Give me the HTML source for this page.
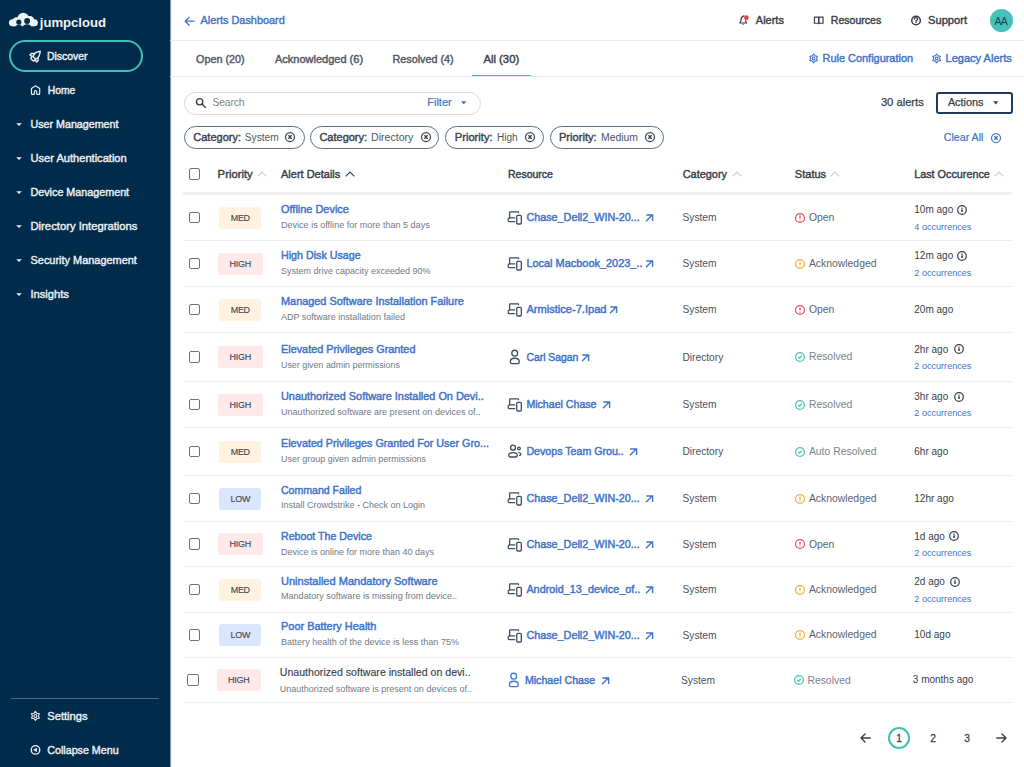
<!DOCTYPE html>
<html><head><meta charset="utf-8"><title>Alerts</title>
<style>
html,body{margin:0;padding:0;width:1024px;height:767px;overflow:hidden;background:#fff;}
body{position:relative;font-family:"Liberation Sans",sans-serif;}
.t{position:absolute;white-space:nowrap;}
svg{overflow:visible}
</style></head><body>
<div style="position:absolute;left:0px;top:0px;width:170px;height:767px;background:#002b4b"></div>
<div style="position:absolute;left:170px;top:0px;width:1px;height:767px;background:#8797a8"></div>
<div style="position:absolute;left:171px;top:0px;width:1px;height:767px;background:#eef0f3"></div>
<svg style="position:absolute;left:6px;top:8px;" width="36" height="24" viewBox="0 0 1024 683"><g fill="#f2f3f6">
<circle cx="185" cy="420" r="102"/><circle cx="490" cy="300" r="165"/><circle cx="805" cy="420" r="102"/>
<circle cx="300" cy="370" r="110"/><circle cx="680" cy="350" r="120"/>
<rect x="185" y="330" width="620" height="192"/></g>
<g fill="#002b4b"><circle cx="365" cy="400" r="74"/><ellipse cx="365" cy="615" rx="118" ry="145"/>
<circle cx="600" cy="372" r="84"/><ellipse cx="600" cy="605" rx="145" ry="145"/>
</g></svg>
<div class="t" style="left:39.80px;top:16px;font-size:13.1px;line-height:13.1px;font-weight:700;color:#f2f3f6;">jumpcloud</div>
<div style="position:absolute;left:9px;top:40px;width:134px;height:32px;box-sizing:border-box;border:2px solid #40bfb5;border-radius:16px"></div>
<svg style="position:absolute;left:26px;top:46px;" width="20" height="20" viewBox="0 0 767 767"><g fill="none" stroke="#eceef2" stroke-width="55" stroke-linejoin="round" stroke-linecap="round">
<path d="M545 200 C420 215 300 290 268 400 L372 500 C485 462 535 340 545 200 Z"/>
<path d="M300 290 L205 290 L150 345 L232 395"/>
<path d="M465 468 L462 560 L405 612 L352 530"/>
<path d="M232 400 L185 455 L200 500 L265 560 L300 575 L350 528"/></g></svg>
<div class="t" style="left:46.90px;top:52px;font-size:10.45px;line-height:10.45px;font-weight:400;color:#eceef2;-webkit-text-stroke:0.42px #eceef2;">Discover</div>
<svg style="position:absolute;left:26px;top:80px;" width="20" height="20" viewBox="0 0 767 767"><path d="M300 555 H245 Q210 555 210 520 V330 L365 225 L525 330 V520 Q525 555 490 555 H445 Q410 555 410 520 V450 Q410 405 365 405 Q320 405 320 450 V520 Q320 555 300 555 Z" fill="none" stroke="#eceef2" stroke-width="46" stroke-linejoin="round"/></svg>
<div class="t" style="left:47.70px;top:86px;font-size:10.35px;line-height:10.35px;font-weight:400;color:#eceef2;-webkit-text-stroke:0.42px #eceef2;">Home</div>
<div class="t" style="left:30.50px;top:119px;font-size:10.7px;line-height:10.7px;font-weight:400;color:#eceef2;-webkit-text-stroke:0.42px #eceef2;">User Management</div>
<svg style="position:absolute;left:15.8px;top:123px;" width="6" height="3.5" viewBox="0 0 6 3.5"><path d="M0.2 0.2 H5.8 L3 3.1 Z" fill="#eceef2"/></svg>
<div class="t" style="left:30.50px;top:153px;font-size:11.1px;line-height:11.1px;font-weight:400;color:#eceef2;-webkit-text-stroke:0.42px #eceef2;">User Authentication</div>
<svg style="position:absolute;left:15.8px;top:157px;" width="6" height="3.5" viewBox="0 0 6 3.5"><path d="M0.2 0.2 H5.8 L3 3.1 Z" fill="#eceef2"/></svg>
<div class="t" style="left:30.50px;top:187px;font-size:10.75px;line-height:10.75px;font-weight:400;color:#eceef2;-webkit-text-stroke:0.42px #eceef2;">Device Management</div>
<svg style="position:absolute;left:15.8px;top:191px;" width="6" height="3.5" viewBox="0 0 6 3.5"><path d="M0.2 0.2 H5.8 L3 3.1 Z" fill="#eceef2"/></svg>
<div class="t" style="left:30.50px;top:221px;font-size:11.25px;line-height:11.25px;font-weight:400;color:#eceef2;-webkit-text-stroke:0.42px #eceef2;">Directory Integrations</div>
<svg style="position:absolute;left:15.8px;top:225px;" width="6" height="3.5" viewBox="0 0 6 3.5"><path d="M0.2 0.2 H5.8 L3 3.1 Z" fill="#eceef2"/></svg>
<div class="t" style="left:30.50px;top:255px;font-size:10.95px;line-height:10.95px;font-weight:400;color:#eceef2;-webkit-text-stroke:0.42px #eceef2;">Security Management</div>
<svg style="position:absolute;left:15.8px;top:259px;" width="6" height="3.5" viewBox="0 0 6 3.5"><path d="M0.2 0.2 H5.8 L3 3.1 Z" fill="#eceef2"/></svg>
<div class="t" style="left:30.50px;top:289px;font-size:11.15px;line-height:11.15px;font-weight:400;color:#eceef2;-webkit-text-stroke:0.42px #eceef2;">Insights</div>
<svg style="position:absolute;left:15.8px;top:293px;" width="6" height="3.5" viewBox="0 0 6 3.5"><path d="M0.2 0.2 H5.8 L3 3.1 Z" fill="#eceef2"/></svg>
<div style="position:absolute;left:11px;top:698px;width:148px;height:1px;background:#4f6883"></div>
<svg style="position:absolute;left:26px;top:704px;" width="20" height="24" viewBox="0 0 20 24"><polygon points="9.40,7.40 10.90,9.30 13.30,9.65 12.40,11.90 13.30,14.15 10.90,14.50 9.40,16.40 7.90,14.50 5.50,14.15 6.40,11.90 5.50,9.65 7.90,9.30" fill="none" stroke="#eceef2" stroke-width="1.15" stroke-linejoin="round"/><circle cx="9.4" cy="11.9" r="1.45" fill="none" stroke="#eceef2" stroke-width="1.15"/></svg>
<div class="t" style="left:47.30px;top:711px;font-size:11.15px;line-height:11.15px;font-weight:400;color:#eceef2;-webkit-text-stroke:0.42px #eceef2;">Settings</div>
<svg style="position:absolute;left:26px;top:740px;" width="20" height="20" viewBox="0 0 20 20"><circle cx="9.5" cy="9.9" r="4.25" fill="none" stroke="#eceef2" stroke-width="1.4"/><path d="M7.6 9.9 L10.6 8.3 V11.5 Z" fill="#eceef2" stroke="#eceef2" stroke-width="0.8" stroke-linejoin="round"/></svg>
<div class="t" style="left:47.30px;top:745px;font-size:10.7px;line-height:10.7px;font-weight:400;color:#eceef2;-webkit-text-stroke:0.42px #eceef2;">Collapse Menu</div>
<svg style="position:absolute;left:183.5px;top:15.5px;" width="11" height="10.5" viewBox="0 0 11 10.5"><path d="M10 5.2 H1.3 M5.2 1.2 L1.2 5.2 L5.2 9.2" fill="none" stroke="#3f74c9" stroke-width="1.3" stroke-linecap="round" stroke-linejoin="round"/></svg>
<div class="t" style="left:200.60px;top:15px;font-size:10.9px;line-height:10.9px;font-weight:400;color:#3f74c9;-webkit-text-stroke:0.4px #3f74c9;">Alerts Dashboard</div>
<svg style="position:absolute;left:735px;top:12px;" width="20" height="18" viewBox="0 0 852 767"><g fill="none" stroke="#383f4b" stroke-width="50" stroke-linejoin="round" stroke-linecap="round">
<path d="M380 165 Q255 200 255 330 Q255 420 205 470 H500 Q455 420 455 360"/></g>
<path d="M295 500 Q355 590 415 500 Z" fill="#383f4b"/>
<circle cx="485" cy="240" r="100" fill="#e3404a"/></svg>
<div class="t" style="left:755.80px;top:15px;font-size:11.0px;line-height:11.0px;font-weight:400;color:#383f4b;-webkit-text-stroke:0.42px #383f4b;">Alerts</div>
<svg style="position:absolute;left:810px;top:12px;" width="18" height="18" viewBox="0 0 767 767"><g fill="none" stroke="#383f4b" stroke-width="52" stroke-linejoin="round"><path d="M190 215 H340 Q372 215 372 250 V495 Q372 480 340 480 H190 Z"/><path d="M555 215 H405 Q372 215 372 250 V495 Q372 480 405 480 H555 Z"/></g></svg>
<div class="t" style="left:830.80px;top:15px;font-size:10.55px;line-height:10.55px;font-weight:400;color:#383f4b;-webkit-text-stroke:0.42px #383f4b;">Resources</div>
<svg style="position:absolute;left:906px;top:11px;" width="20" height="20" viewBox="0 0 767 767"><circle cx="385" cy="365" r="165" fill="none" stroke="#383f4b" stroke-width="58"/><path d="M320 315 Q320 255 385 255 Q450 255 450 310 Q450 350 390 375 V395" fill="none" stroke="#383f4b" stroke-width="48" stroke-linecap="round"/><circle cx="385" cy="440" r="26" fill="#383f4b"/></svg>
<div class="t" style="left:928.00px;top:15px;font-size:11.15px;line-height:11.15px;font-weight:400;color:#383f4b;-webkit-text-stroke:0.42px #383f4b;">Support</div>
<div style="position:absolute;left:989.8px;top:9px;width:23px;height:23px;background:#45c2b8;border-radius:50%"></div>
<div class="t" style="left:994.40px;top:16px;font-size:10.6px;line-height:10.6px;font-weight:400;color:#22405c;letter-spacing:-0.7px">AA</div>
<div style="position:absolute;left:170px;top:40px;width:854px;height:1px;background:#e7e9ec"></div>
<div class="t" style="left:196.10px;top:54px;font-size:10.8px;line-height:10.8px;font-weight:400;color:#505865;-webkit-text-stroke:0.42px #505865;">Open (20)</div>
<div class="t" style="left:275.00px;top:54px;font-size:11.0px;line-height:11.0px;font-weight:400;color:#505865;-webkit-text-stroke:0.42px #505865;">Acknowledged (6)</div>
<div class="t" style="left:392.60px;top:54px;font-size:10.75px;line-height:10.75px;font-weight:400;color:#505865;-webkit-text-stroke:0.42px #505865;">Resolved (4)</div>
<div class="t" style="left:483.40px;top:54px;font-size:11.3px;line-height:11.3px;font-weight:400;color:#373e4a;-webkit-text-stroke:0.42px #373e4a;">All (30)</div>
<div style="position:absolute;left:472px;top:75px;width:59px;height:2px;background:#40bfb5"></div>
<div style="position:absolute;left:170px;top:76px;width:854px;height:1px;background:#e7e9ec"></div>
<svg style="position:absolute;left:804px;top:48px;" width="20" height="20" viewBox="0 0 20 20"><polygon points="9.60,6.00 11.05,7.89 13.41,8.20 12.50,10.40 13.41,12.60 11.05,12.91 9.60,14.80 8.15,12.91 5.79,12.60 6.70,10.40 5.79,8.20 8.15,7.89" fill="none" stroke="#3f74c9" stroke-width="1.1" stroke-linejoin="round"/><circle cx="9.6" cy="10.4" r="1.35" fill="none" stroke="#3f74c9" stroke-width="1.1"/></svg>
<div class="t" style="left:822.50px;top:53px;font-size:10.95px;line-height:10.95px;font-weight:400;color:#3f74c9;-webkit-text-stroke:0.42px #3f74c9;">Rule Configuration</div>
<svg style="position:absolute;left:927px;top:48px;" width="20" height="20" viewBox="0 0 20 20"><polygon points="9.60,6.00 11.05,7.89 13.41,8.20 12.50,10.40 13.41,12.60 11.05,12.91 9.60,14.80 8.15,12.91 5.79,12.60 6.70,10.40 5.79,8.20 8.15,7.89" fill="none" stroke="#3f74c9" stroke-width="1.1" stroke-linejoin="round"/><circle cx="9.6" cy="10.4" r="1.35" fill="none" stroke="#3f74c9" stroke-width="1.1"/></svg>
<div class="t" style="left:945.50px;top:53px;font-size:11.05px;line-height:11.05px;font-weight:400;color:#3f74c9;-webkit-text-stroke:0.42px #3f74c9;">Legacy Alerts</div>
<div style="position:absolute;left:184px;top:91.5px;width:297px;height:23px;box-sizing:border-box;border:1px solid #d9dcdf;border-radius:12px;background:#fff"></div>
<svg style="position:absolute;left:190px;top:94px;" width="20" height="18" viewBox="0 0 852 767"><circle cx="410" cy="330" r="135" fill="none" stroke="#383f4b" stroke-width="58"/><path d="M520 440 L650 565" stroke="#383f4b" stroke-width="62" stroke-linecap="round"/></svg>
<div class="t" style="left:212.50px;top:98px;font-size:10.4px;line-height:10.4px;font-weight:400;color:#7b828b;letter-spacing:-0.2px">Search</div>
<div class="t" style="left:427.20px;top:97px;font-size:11.05px;line-height:11.05px;font-weight:400;color:#3f74c9;-webkit-text-stroke:0.2px #3f74c9;">Filter</div>
<svg style="position:absolute;left:461.2px;top:101px;" width="5.5" height="3.8" viewBox="0 0 5.5 3.8"><path d="M0.2 0.3 H5.3 L2.75 3.5 Z" fill="#3f74c9"/></svg>
<div class="t" style="left:880.90px;top:97px;font-size:11.2px;line-height:11.2px;font-weight:400;color:#383f4b;-webkit-text-stroke:0.25px #383f4b;">30 alerts</div>
<div style="position:absolute;left:936px;top:92px;width:76.5px;height:22px;box-sizing:border-box;border:2px solid #1f3b59;border-radius:3px"></div>
<div class="t" style="left:947.90px;top:97px;font-size:10.85px;line-height:10.85px;font-weight:400;color:#383f4b;-webkit-text-stroke:0.25px #383f4b;">Actions</div>
<svg style="position:absolute;left:992.8px;top:101px;" width="5.5" height="3.8" viewBox="0 0 5.5 3.8"><path d="M0.2 0.3 H5.3 L2.75 3.5 Z" fill="#383f4b"/></svg>
<div style="position:absolute;left:184px;top:125.5px;width:121px;height:23px;box-sizing:border-box;border:1.5px solid #57718d;border-radius:12px"></div>
<div class="t" style="left:193.30px;top:132px;font-size:11.0px;line-height:11.0px;font-weight:400;color:#3b4350;-webkit-text-stroke:0.42px #3b4350;">Category:</div>
<div class="t" style="left:244.80px;top:133px;font-size:10.2px;line-height:10.2px;font-weight:400;color:#4d5562;">System</div>
<svg style="position:absolute;left:284px;top:131px;" width="12" height="12" viewBox="0 0 12 12"><circle cx="6" cy="6" r="4.5" fill="none" stroke="#3b4350" stroke-width="1.25"/><path d="M4.4 4.2 L7.6 7.8 M7.6 4.2 L4.4 7.8" stroke="#3b4350" stroke-width="1.3"/></svg>
<div style="position:absolute;left:310px;top:125.5px;width:129.3px;height:23px;box-sizing:border-box;border:1.5px solid #57718d;border-radius:12px"></div>
<div class="t" style="left:319.40px;top:132px;font-size:11.0px;line-height:11.0px;font-weight:400;color:#3b4350;-webkit-text-stroke:0.42px #3b4350;">Category:</div>
<div class="t" style="left:371.00px;top:132px;font-size:10.6px;line-height:10.6px;font-weight:400;color:#4d5562;">Directory</div>
<svg style="position:absolute;left:420px;top:131px;" width="12" height="12" viewBox="0 0 12 12"><circle cx="6" cy="6" r="4.5" fill="none" stroke="#3b4350" stroke-width="1.25"/><path d="M4.4 4.2 L7.6 7.8 M7.6 4.2 L4.4 7.8" stroke="#3b4350" stroke-width="1.3"/></svg>
<div style="position:absolute;left:445.2px;top:125.5px;width:98.40000000000003px;height:23px;box-sizing:border-box;border:1.5px solid #57718d;border-radius:12px"></div>
<div class="t" style="left:454.80px;top:132px;font-size:11.15px;line-height:11.15px;font-weight:400;color:#3b4350;-webkit-text-stroke:0.42px #3b4350;">Priority:</div>
<div class="t" style="left:497.00px;top:133px;font-size:10.0px;line-height:10.0px;font-weight:400;color:#4d5562;">High</div>
<svg style="position:absolute;left:524px;top:131px;" width="12" height="12" viewBox="0 0 12 12"><circle cx="6" cy="6" r="4.5" fill="none" stroke="#3b4350" stroke-width="1.25"/><path d="M4.4 4.2 L7.6 7.8 M7.6 4.2 L4.4 7.8" stroke="#3b4350" stroke-width="1.3"/></svg>
<div style="position:absolute;left:549.6px;top:125.5px;width:114.19999999999993px;height:23px;box-sizing:border-box;border:1.5px solid #57718d;border-radius:12px"></div>
<div class="t" style="left:558.90px;top:132px;font-size:11.15px;line-height:11.15px;font-weight:400;color:#3b4350;-webkit-text-stroke:0.42px #3b4350;">Priority:</div>
<div class="t" style="left:601.00px;top:133px;font-size:10.4px;line-height:10.4px;font-weight:400;color:#4d5562;">Medium</div>
<svg style="position:absolute;left:644px;top:131px;" width="12" height="12" viewBox="0 0 12 12"><circle cx="6" cy="6" r="4.5" fill="none" stroke="#3b4350" stroke-width="1.25"/><path d="M4.4 4.2 L7.6 7.8 M7.6 4.2 L4.4 7.8" stroke="#3b4350" stroke-width="1.3"/></svg>
<div class="t" style="left:943.70px;top:132px;font-size:10.7px;line-height:10.7px;font-weight:400;color:#3f74c9;-webkit-text-stroke:0.2px #3f74c9;">Clear All</div>
<svg style="position:absolute;left:990px;top:132px;" width="12" height="12" viewBox="0 0 12 12"><circle cx="6" cy="6" r="4.5" fill="none" stroke="#3f74c9" stroke-width="1.25"/><path d="M4.4 4.2 L7.6 7.8 M7.6 4.2 L4.4 7.8" stroke="#3f74c9" stroke-width="1.3"/></svg>
<div style="position:absolute;left:188.9px;top:168.2px;width:11.5px;height:11.5px;box-sizing:border-box;border:1.5px solid #6c717a;border-radius:2px;background:#fff"></div>
<div class="t" style="left:217.60px;top:169px;font-size:11.3px;line-height:11.3px;font-weight:400;color:#373e4a;-webkit-text-stroke:0.42px #373e4a;">Priority</div>
<svg style="position:absolute;left:257.3px;top:170.5px;" width="10" height="6" viewBox="0 0 10 6"><path d="M0.7 5.3 L5 1 L9.3 5.3" fill="none" stroke="#c9cdd2" stroke-width="1.1"/></svg>
<div class="t" style="left:281.00px;top:169px;font-size:11.0px;line-height:11.0px;font-weight:400;color:#373e4a;-webkit-text-stroke:0.42px #373e4a;">Alert Details</div>
<svg style="position:absolute;left:345.2px;top:170.5px;" width="10" height="6" viewBox="0 0 10 6"><path d="M0.7 5.3 L5 1 L9.3 5.3" fill="none" stroke="#373e4a" stroke-width="1.1"/></svg>
<div class="t" style="left:508.00px;top:169px;font-size:10.5px;line-height:10.5px;font-weight:400;color:#373e4a;-webkit-text-stroke:0.42px #373e4a;">Resource</div>
<div class="t" style="left:682.70px;top:169px;font-size:10.95px;line-height:10.95px;font-weight:400;color:#373e4a;-webkit-text-stroke:0.42px #373e4a;">Category</div>
<svg style="position:absolute;left:731.5px;top:170.5px;" width="10" height="6" viewBox="0 0 10 6"><path d="M0.7 5.3 L5 1 L9.3 5.3" fill="none" stroke="#c9cdd2" stroke-width="1.1"/></svg>
<div class="t" style="left:794.80px;top:169px;font-size:11.05px;line-height:11.05px;font-weight:400;color:#373e4a;-webkit-text-stroke:0.42px #373e4a;">Status</div>
<svg style="position:absolute;left:830.3px;top:170.5px;" width="10" height="6" viewBox="0 0 10 6"><path d="M0.7 5.3 L5 1 L9.3 5.3" fill="none" stroke="#c9cdd2" stroke-width="1.1"/></svg>
<div class="t" style="left:914.20px;top:169px;font-size:10.8px;line-height:10.8px;font-weight:400;color:#373e4a;-webkit-text-stroke:0.42px #373e4a;">Last Occurence</div>
<svg style="position:absolute;left:994.4px;top:170.5px;" width="10" height="6" viewBox="0 0 10 6"><path d="M0.7 5.3 L5 1 L9.3 5.3" fill="none" stroke="#c9cdd2" stroke-width="1.1"/></svg>
<div style="position:absolute;left:183px;top:192px;width:829px;height:3px;background:#eef0f2"></div>
<div style="position:absolute;left:183px;top:240px;width:829px;height:1px;background:#eceef0"></div>
<div style="position:absolute;left:188.9px;top:211.8px;width:11.5px;height:11.5px;box-sizing:border-box;border:1.5px solid #6c717a;border-radius:2px;background:#fff"></div>
<div style="position:absolute;left:219.4px;top:206.5px;width:42px;height:22px;background:#fff3df;border-radius:3px"></div>
<div class="t" style="left:219.40px;top:214px;font-size:8.95px;line-height:8.95px;font-weight:400;color:#3b4350;-webkit-text-stroke:0.12px #3b4350;width:42px;text-align:center;letter-spacing:-0.25px;text-indent:-0.25px">MED</div>
<div class="t" style="left:281.00px;top:204px;font-size:10.95px;line-height:10.95px;font-weight:400;color:#3f74c9;-webkit-text-stroke:0.45px #3f74c9;">Offline Device</div>
<div class="t" style="left:281.00px;top:221px;font-size:9.05px;line-height:9.05px;font-weight:400;color:#737a84;">Device is offline for more than 5 days</div>
<svg style="position:absolute;left:502px;top:204.0px;" width="30" height="26" viewBox="0 0 885 767"><g fill="none" stroke="#3b4c63" stroke-width="38" stroke-linejoin="round" stroke-linecap="round"><path d="M225 410 V255 Q225 235 245 235 H470 Q490 235 490 255"/><path d="M375 410 H215 Q180 410 180 465 Q180 520 215 520 H375"/><rect x="435" y="335" width="135" height="255" rx="30"/></g></svg>
<div class="t" style="left:526.40px;top:212px;font-size:10.8px;line-height:10.8px;font-weight:400;color:#3f74c9;-webkit-text-stroke:0.45px #3f74c9;">Chase_Dell2_WIN-20...</div>
<svg style="position:absolute;left:645px;top:214.3px;" width="9" height="8" viewBox="0 0 9 8"><path d="M1 7.2 L7.2 1.1 M1.3 1 H7.6 V7" fill="none" stroke="#3f74c9" stroke-width="1.4"/></svg>
<div class="t" style="left:682.50px;top:213px;font-size:10.2px;line-height:10.2px;font-weight:400;color:#4a525e;">System</div>
<svg style="position:absolute;left:794.3px;top:211.6px;" width="12" height="12" viewBox="0 0 12 12"><circle cx="6" cy="6" r="4.45" fill="none" stroke="#e4545c" stroke-width="1.25"/><path d="M6 3.6 V6.4" stroke="#e4545c" stroke-width="1.3"/><circle cx="6" cy="8.1" r="0.7" fill="#e4545c"/></svg>
<div class="t" style="left:808.90px;top:213px;font-size:10.4px;line-height:10.4px;font-weight:400;color:#5b6370;">Open</div>
<div class="t" style="left:914.30px;top:205px;font-size:10.0px;line-height:10.0px;font-weight:400;color:#383f4b;">10m ago</div>
<div class="t" style="left:914.30px;top:223px;font-size:9.1px;line-height:9.1px;font-weight:400;color:#3f74c9;">4 occurrences</div>
<div style="position:absolute;left:183px;top:286px;width:829px;height:1px;background:#eceef0"></div>
<div style="position:absolute;left:188.9px;top:257.8px;width:11.5px;height:11.5px;box-sizing:border-box;border:1.5px solid #6c717a;border-radius:2px;background:#fff"></div>
<div style="position:absolute;left:218.1px;top:252.5px;width:44.5px;height:22px;background:#fde8ea;border-radius:3px"></div>
<div class="t" style="left:218.10px;top:260px;font-size:8.95px;line-height:8.95px;font-weight:400;color:#3b4350;-webkit-text-stroke:0.12px #3b4350;width:44.5px;text-align:center;letter-spacing:-0.25px;text-indent:-0.25px">HIGH</div>
<div class="t" style="left:281.00px;top:250px;font-size:10.7px;line-height:10.7px;font-weight:400;color:#3f74c9;-webkit-text-stroke:0.45px #3f74c9;">High Disk Usage</div>
<div class="t" style="left:281.00px;top:267px;font-size:9.0px;line-height:9.0px;font-weight:400;color:#737a84;">System drive capacity exceeded 90%</div>
<svg style="position:absolute;left:502px;top:250.0px;" width="30" height="26" viewBox="0 0 885 767"><g fill="none" stroke="#3b4c63" stroke-width="38" stroke-linejoin="round" stroke-linecap="round"><path d="M225 410 V255 Q225 235 245 235 H470 Q490 235 490 255"/><path d="M375 410 H215 Q180 410 180 465 Q180 520 215 520 H375"/><rect x="435" y="335" width="135" height="255" rx="30"/></g></svg>
<div class="t" style="left:526.40px;top:258px;font-size:10.95px;line-height:10.95px;font-weight:400;color:#3f74c9;-webkit-text-stroke:0.45px #3f74c9;">Local Macbook_2023_..</div>
<svg style="position:absolute;left:645px;top:260.3px;" width="9" height="8" viewBox="0 0 9 8"><path d="M1 7.2 L7.2 1.1 M1.3 1 H7.6 V7" fill="none" stroke="#3f74c9" stroke-width="1.4"/></svg>
<div class="t" style="left:682.50px;top:259px;font-size:10.2px;line-height:10.2px;font-weight:400;color:#4a525e;">System</div>
<svg style="position:absolute;left:794.3px;top:257.6px;" width="12" height="12" viewBox="0 0 12 12"><circle cx="6" cy="6" r="4.45" fill="none" stroke="#f0b030" stroke-width="1.25"/><path d="M6 3.6 V6.4" stroke="#f0b030" stroke-width="1.3"/><circle cx="6" cy="8.1" r="0.7" fill="#f0b030"/></svg>
<div class="t" style="left:808.90px;top:259px;font-size:10.4px;line-height:10.4px;font-weight:400;color:#5b6370;">Acknowledged</div>
<div class="t" style="left:914.30px;top:251px;font-size:10.0px;line-height:10.0px;font-weight:400;color:#383f4b;">12m ago</div>
<div class="t" style="left:914.30px;top:269px;font-size:9.1px;line-height:9.1px;font-weight:400;color:#3f74c9;">2 occurrences</div>
<div style="position:absolute;left:183px;top:332px;width:829px;height:1px;background:#eceef0"></div>
<div style="position:absolute;left:188.9px;top:303.8px;width:11.5px;height:11.5px;box-sizing:border-box;border:1.5px solid #6c717a;border-radius:2px;background:#fff"></div>
<div style="position:absolute;left:219.4px;top:298.5px;width:42px;height:22px;background:#fff3df;border-radius:3px"></div>
<div class="t" style="left:219.40px;top:306px;font-size:8.95px;line-height:8.95px;font-weight:400;color:#3b4350;-webkit-text-stroke:0.12px #3b4350;width:42px;text-align:center;letter-spacing:-0.25px;text-indent:-0.25px">MED</div>
<div class="t" style="left:281.00px;top:296px;font-size:10.9px;line-height:10.9px;font-weight:400;color:#3f74c9;-webkit-text-stroke:0.45px #3f74c9;">Managed Software Installation Failure</div>
<div class="t" style="left:281.00px;top:313px;font-size:9.0px;line-height:9.0px;font-weight:400;color:#737a84;">ADP software installation failed</div>
<svg style="position:absolute;left:502px;top:296.0px;" width="30" height="26" viewBox="0 0 885 767"><g fill="none" stroke="#3b4c63" stroke-width="38" stroke-linejoin="round" stroke-linecap="round"><path d="M225 410 V255 Q225 235 245 235 H470 Q490 235 490 255"/><path d="M375 410 H215 Q180 410 180 465 Q180 520 215 520 H375"/><rect x="435" y="335" width="135" height="255" rx="30"/></g></svg>
<div class="t" style="left:526.40px;top:304px;font-size:11.1px;line-height:11.1px;font-weight:400;color:#3f74c9;-webkit-text-stroke:0.45px #3f74c9;">Armistice-7.Ipad</div>
<svg style="position:absolute;left:608.7px;top:306.3px;" width="9" height="8" viewBox="0 0 9 8"><path d="M1 7.2 L7.2 1.1 M1.3 1 H7.6 V7" fill="none" stroke="#3f74c9" stroke-width="1.4"/></svg>
<div class="t" style="left:682.50px;top:305px;font-size:10.2px;line-height:10.2px;font-weight:400;color:#4a525e;">System</div>
<svg style="position:absolute;left:794.3px;top:303.6px;" width="12" height="12" viewBox="0 0 12 12"><circle cx="6" cy="6" r="4.45" fill="none" stroke="#e4545c" stroke-width="1.25"/><path d="M6 3.6 V6.4" stroke="#e4545c" stroke-width="1.3"/><circle cx="6" cy="8.1" r="0.7" fill="#e4545c"/></svg>
<div class="t" style="left:808.90px;top:305px;font-size:10.4px;line-height:10.4px;font-weight:400;color:#5b6370;">Open</div>
<div class="t" style="left:914.30px;top:305px;font-size:10.0px;line-height:10.0px;font-weight:400;color:#383f4b;">20m ago</div>
<div style="position:absolute;left:183px;top:381px;width:829px;height:1px;background:#eceef0"></div>
<div style="position:absolute;left:188.9px;top:351.3px;width:11.5px;height:11.5px;box-sizing:border-box;border:1.5px solid #6c717a;border-radius:2px;background:#fff"></div>
<div style="position:absolute;left:218.1px;top:346.0px;width:44.5px;height:22px;background:#fde8ea;border-radius:3px"></div>
<div class="t" style="left:218.10px;top:353px;font-size:8.95px;line-height:8.95px;font-weight:400;color:#3b4350;-webkit-text-stroke:0.12px #3b4350;width:44.5px;text-align:center;letter-spacing:-0.25px;text-indent:-0.25px">HIGH</div>
<div class="t" style="left:281.00px;top:344px;font-size:10.85px;line-height:10.85px;font-weight:400;color:#3f74c9;-webkit-text-stroke:0.45px #3f74c9;">Elevated Privileges Granted</div>
<div class="t" style="left:281.00px;top:361px;font-size:8.9px;line-height:8.9px;font-weight:400;color:#737a84;">User given admin permissions</div>
<svg style="position:absolute;left:502px;top:343.5px;" width="30" height="26" viewBox="0 0 885 767"><g fill="none" stroke="#3b4c63" stroke-width="38" stroke-linejoin="round"><circle cx="375" cy="270" r="86"/><path d="M245 520 Q245 420 375 420 Q510 420 510 520 Q510 575 460 578 H290 Q245 575 245 520 Z"/></g></svg>
<div class="t" style="left:526.40px;top:353px;font-size:10.4px;line-height:10.4px;font-weight:400;color:#3f74c9;-webkit-text-stroke:0.45px #3f74c9;">Carl Sagan</div>
<svg style="position:absolute;left:581px;top:353.8px;" width="9" height="8" viewBox="0 0 9 8"><path d="M1 7.2 L7.2 1.1 M1.3 1 H7.6 V7" fill="none" stroke="#3f74c9" stroke-width="1.4"/></svg>
<div class="t" style="left:682.50px;top:353px;font-size:10.2px;line-height:10.2px;font-weight:400;color:#4a525e;">Directory</div>
<svg style="position:absolute;left:794.3px;top:351.1px;" width="12" height="12" viewBox="0 0 12 12"><circle cx="6" cy="6" r="4.45" fill="none" stroke="#52c5b9" stroke-width="1.3"/><path d="M4 6.1 L5.4 7.3 L8 4.6" fill="none" stroke="#52c5b9" stroke-width="1.3"/></svg>
<div class="t" style="left:808.90px;top:352px;font-size:10.4px;line-height:10.4px;font-weight:400;color:#7b828c;">Resolved</div>
<div class="t" style="left:914.30px;top:345px;font-size:10.0px;line-height:10.0px;font-weight:400;color:#383f4b;">2hr ago</div>
<div class="t" style="left:914.30px;top:362px;font-size:9.1px;line-height:9.1px;font-weight:400;color:#3f74c9;">2 occurrences</div>
<div style="position:absolute;left:183px;top:427px;width:829px;height:1px;background:#eceef0"></div>
<div style="position:absolute;left:188.9px;top:398.8px;width:11.5px;height:11.5px;box-sizing:border-box;border:1.5px solid #6c717a;border-radius:2px;background:#fff"></div>
<div style="position:absolute;left:218.1px;top:393.5px;width:44.5px;height:22px;background:#fde8ea;border-radius:3px"></div>
<div class="t" style="left:218.10px;top:401px;font-size:8.95px;line-height:8.95px;font-weight:400;color:#3b4350;-webkit-text-stroke:0.12px #3b4350;width:44.5px;text-align:center;letter-spacing:-0.25px;text-indent:-0.25px">HIGH</div>
<div class="t" style="left:281.00px;top:391px;font-size:10.9px;line-height:10.9px;font-weight:400;color:#3f74c9;-webkit-text-stroke:0.45px #3f74c9;">Unauthorized Software Installed On Devi..</div>
<div class="t" style="left:281.00px;top:408px;font-size:9.05px;line-height:9.05px;font-weight:400;color:#737a84;">Unauthorized software are present on devices of..</div>
<svg style="position:absolute;left:502px;top:391.0px;" width="30" height="26" viewBox="0 0 885 767"><g fill="none" stroke="#3b4c63" stroke-width="38" stroke-linejoin="round" stroke-linecap="round"><path d="M225 410 V255 Q225 235 245 235 H470 Q490 235 490 255"/><path d="M375 410 H215 Q180 410 180 465 Q180 520 215 520 H375"/><rect x="435" y="335" width="135" height="255" rx="30"/></g></svg>
<div class="t" style="left:526.40px;top:399px;font-size:10.6px;line-height:10.6px;font-weight:400;color:#3f74c9;-webkit-text-stroke:0.45px #3f74c9;">Michael Chase</div>
<svg style="position:absolute;left:601.6px;top:401.3px;" width="9" height="8" viewBox="0 0 9 8"><path d="M1 7.2 L7.2 1.1 M1.3 1 H7.6 V7" fill="none" stroke="#3f74c9" stroke-width="1.4"/></svg>
<div class="t" style="left:682.50px;top:400px;font-size:10.2px;line-height:10.2px;font-weight:400;color:#4a525e;">System</div>
<svg style="position:absolute;left:794.3px;top:398.6px;" width="12" height="12" viewBox="0 0 12 12"><circle cx="6" cy="6" r="4.45" fill="none" stroke="#52c5b9" stroke-width="1.3"/><path d="M4 6.1 L5.4 7.3 L8 4.6" fill="none" stroke="#52c5b9" stroke-width="1.3"/></svg>
<div class="t" style="left:808.90px;top:400px;font-size:10.4px;line-height:10.4px;font-weight:400;color:#7b828c;">Resolved</div>
<div class="t" style="left:914.30px;top:392px;font-size:10.0px;line-height:10.0px;font-weight:400;color:#383f4b;">3hr ago</div>
<div class="t" style="left:914.30px;top:409px;font-size:9.1px;line-height:9.1px;font-weight:400;color:#3f74c9;">2 occurrences</div>
<div style="position:absolute;left:183px;top:475px;width:829px;height:1px;background:#eceef0"></div>
<div style="position:absolute;left:188.9px;top:445.8px;width:11.5px;height:11.5px;box-sizing:border-box;border:1.5px solid #6c717a;border-radius:2px;background:#fff"></div>
<div style="position:absolute;left:219.4px;top:440.5px;width:42px;height:22px;background:#fff3df;border-radius:3px"></div>
<div class="t" style="left:219.40px;top:448px;font-size:8.95px;line-height:8.95px;font-weight:400;color:#3b4350;-webkit-text-stroke:0.12px #3b4350;width:42px;text-align:center;letter-spacing:-0.25px;text-indent:-0.25px">MED</div>
<div class="t" style="left:281.00px;top:438px;font-size:10.75px;line-height:10.75px;font-weight:400;color:#3f74c9;-webkit-text-stroke:0.45px #3f74c9;">Elevated Privileges Granted For User Gro...</div>
<div class="t" style="left:281.00px;top:455px;font-size:8.95px;line-height:8.95px;font-weight:400;color:#737a84;">User group given admin permissions</div>
<svg style="position:absolute;left:502px;top:438.0px;" width="30" height="26" viewBox="0 0 885 767"><g fill="none" stroke="#3b4c63" stroke-width="38" stroke-linejoin="round" stroke-linecap="round"><circle cx="325" cy="285" r="72"/><path d="M200 500 Q200 430 325 430 Q450 430 450 500 Q450 560 400 560 H250 Q200 560 200 500 Z"/><circle cx="500" cy="312" r="40"/><path d="M495 430 Q560 435 560 475 Q560 510 520 515"/></g></svg>
<div class="t" style="left:526.40px;top:446px;font-size:10.65px;line-height:10.65px;font-weight:400;color:#3f74c9;-webkit-text-stroke:0.45px #3f74c9;">Devops Team Grou..</div>
<svg style="position:absolute;left:629px;top:448.3px;" width="9" height="8" viewBox="0 0 9 8"><path d="M1 7.2 L7.2 1.1 M1.3 1 H7.6 V7" fill="none" stroke="#3f74c9" stroke-width="1.4"/></svg>
<div class="t" style="left:682.50px;top:447px;font-size:10.2px;line-height:10.2px;font-weight:400;color:#4a525e;">Directory</div>
<svg style="position:absolute;left:794.3px;top:445.6px;" width="12" height="12" viewBox="0 0 12 12"><circle cx="6" cy="6" r="4.45" fill="none" stroke="#52c5b9" stroke-width="1.3"/><path d="M4 6.1 L5.4 7.3 L8 4.6" fill="none" stroke="#52c5b9" stroke-width="1.3"/></svg>
<div class="t" style="left:808.90px;top:447px;font-size:10.4px;line-height:10.4px;font-weight:400;color:#7b828c;">Auto Resolved</div>
<div class="t" style="left:914.30px;top:447px;font-size:10.0px;line-height:10.0px;font-weight:400;color:#383f4b;">6hr ago</div>
<div style="position:absolute;left:183px;top:521px;width:829px;height:1px;background:#eceef0"></div>
<div style="position:absolute;left:188.9px;top:492.8px;width:11.5px;height:11.5px;box-sizing:border-box;border:1.5px solid #6c717a;border-radius:2px;background:#fff"></div>
<div style="position:absolute;left:219.4px;top:487.5px;width:42px;height:22px;background:#dae6fc;border-radius:3px"></div>
<div class="t" style="left:219.40px;top:495px;font-size:8.95px;line-height:8.95px;font-weight:400;color:#3b4350;-webkit-text-stroke:0.12px #3b4350;width:42px;text-align:center;letter-spacing:-0.25px;text-indent:-0.25px">LOW</div>
<div class="t" style="left:281.00px;top:485px;font-size:10.55px;line-height:10.55px;font-weight:400;color:#3f74c9;-webkit-text-stroke:0.45px #3f74c9;">Command Failed</div>
<div class="t" style="left:281.00px;top:501px;font-size:9.0px;line-height:9.0px;font-weight:400;color:#737a84;">Install Crowdstrike - Check on Login</div>
<svg style="position:absolute;left:502px;top:485.0px;" width="30" height="26" viewBox="0 0 885 767"><g fill="none" stroke="#3b4c63" stroke-width="38" stroke-linejoin="round" stroke-linecap="round"><path d="M225 410 V255 Q225 235 245 235 H470 Q490 235 490 255"/><path d="M375 410 H215 Q180 410 180 465 Q180 520 215 520 H375"/><rect x="435" y="335" width="135" height="255" rx="30"/></g></svg>
<div class="t" style="left:526.40px;top:493px;font-size:10.8px;line-height:10.8px;font-weight:400;color:#3f74c9;-webkit-text-stroke:0.45px #3f74c9;">Chase_Dell2_WIN-20...</div>
<svg style="position:absolute;left:645px;top:495.3px;" width="9" height="8" viewBox="0 0 9 8"><path d="M1 7.2 L7.2 1.1 M1.3 1 H7.6 V7" fill="none" stroke="#3f74c9" stroke-width="1.4"/></svg>
<div class="t" style="left:682.50px;top:494px;font-size:10.2px;line-height:10.2px;font-weight:400;color:#4a525e;">System</div>
<svg style="position:absolute;left:794.3px;top:492.6px;" width="12" height="12" viewBox="0 0 12 12"><circle cx="6" cy="6" r="4.45" fill="none" stroke="#f0b030" stroke-width="1.25"/><path d="M6 3.6 V6.4" stroke="#f0b030" stroke-width="1.3"/><circle cx="6" cy="8.1" r="0.7" fill="#f0b030"/></svg>
<div class="t" style="left:808.90px;top:494px;font-size:10.4px;line-height:10.4px;font-weight:400;color:#5b6370;">Acknowledged</div>
<div class="t" style="left:914.30px;top:494px;font-size:10.0px;line-height:10.0px;font-weight:400;color:#383f4b;">12hr ago</div>
<div style="position:absolute;left:183px;top:566px;width:829px;height:1px;background:#eceef0"></div>
<div style="position:absolute;left:188.9px;top:538.3px;width:11.5px;height:11.5px;box-sizing:border-box;border:1.5px solid #6c717a;border-radius:2px;background:#fff"></div>
<div style="position:absolute;left:218.1px;top:533.0px;width:44.5px;height:22px;background:#fde8ea;border-radius:3px"></div>
<div class="t" style="left:218.10px;top:540px;font-size:8.95px;line-height:8.95px;font-weight:400;color:#3b4350;-webkit-text-stroke:0.12px #3b4350;width:44.5px;text-align:center;letter-spacing:-0.25px;text-indent:-0.25px">HIGH</div>
<div class="t" style="left:281.00px;top:531px;font-size:10.65px;line-height:10.65px;font-weight:400;color:#3f74c9;-webkit-text-stroke:0.45px #3f74c9;">Reboot The Device</div>
<div class="t" style="left:281.00px;top:548px;font-size:9.0px;line-height:9.0px;font-weight:400;color:#737a84;">Device is online for more than 40 days</div>
<svg style="position:absolute;left:502px;top:530.5px;" width="30" height="26" viewBox="0 0 885 767"><g fill="none" stroke="#3b4c63" stroke-width="38" stroke-linejoin="round" stroke-linecap="round"><path d="M225 410 V255 Q225 235 245 235 H470 Q490 235 490 255"/><path d="M375 410 H215 Q180 410 180 465 Q180 520 215 520 H375"/><rect x="435" y="335" width="135" height="255" rx="30"/></g></svg>
<div class="t" style="left:526.40px;top:539px;font-size:10.8px;line-height:10.8px;font-weight:400;color:#3f74c9;-webkit-text-stroke:0.45px #3f74c9;">Chase_Dell2_WIN-20...</div>
<svg style="position:absolute;left:645px;top:540.8px;" width="9" height="8" viewBox="0 0 9 8"><path d="M1 7.2 L7.2 1.1 M1.3 1 H7.6 V7" fill="none" stroke="#3f74c9" stroke-width="1.4"/></svg>
<div class="t" style="left:682.50px;top:540px;font-size:10.2px;line-height:10.2px;font-weight:400;color:#4a525e;">System</div>
<svg style="position:absolute;left:794.3px;top:538.1px;" width="12" height="12" viewBox="0 0 12 12"><circle cx="6" cy="6" r="4.45" fill="none" stroke="#e4545c" stroke-width="1.25"/><path d="M6 3.6 V6.4" stroke="#e4545c" stroke-width="1.3"/><circle cx="6" cy="8.1" r="0.7" fill="#e4545c"/></svg>
<div class="t" style="left:808.90px;top:540px;font-size:10.4px;line-height:10.4px;font-weight:400;color:#5b6370;">Open</div>
<div class="t" style="left:914.30px;top:532px;font-size:10.0px;line-height:10.0px;font-weight:400;color:#383f4b;">1d ago</div>
<div class="t" style="left:914.30px;top:549px;font-size:9.1px;line-height:9.1px;font-weight:400;color:#3f74c9;">2 occurrences</div>
<div style="position:absolute;left:183px;top:612px;width:829px;height:1px;background:#eceef0"></div>
<div style="position:absolute;left:188.9px;top:583.8px;width:11.5px;height:11.5px;box-sizing:border-box;border:1.5px solid #6c717a;border-radius:2px;background:#fff"></div>
<div style="position:absolute;left:219.4px;top:578.5px;width:42px;height:22px;background:#fff3df;border-radius:3px"></div>
<div class="t" style="left:219.40px;top:586px;font-size:8.95px;line-height:8.95px;font-weight:400;color:#3b4350;-webkit-text-stroke:0.12px #3b4350;width:42px;text-align:center;letter-spacing:-0.25px;text-indent:-0.25px">MED</div>
<div class="t" style="left:281.00px;top:576px;font-size:11.05px;line-height:11.05px;font-weight:400;color:#3f74c9;-webkit-text-stroke:0.45px #3f74c9;">Uninstalled Mandatory Software</div>
<div class="t" style="left:281.00px;top:592px;font-size:9.05px;line-height:9.05px;font-weight:400;color:#737a84;">Mandatory software is missing from device..</div>
<svg style="position:absolute;left:502px;top:576.0px;" width="30" height="26" viewBox="0 0 885 767"><g fill="none" stroke="#3b4c63" stroke-width="38" stroke-linejoin="round" stroke-linecap="round"><path d="M225 410 V255 Q225 235 245 235 H470 Q490 235 490 255"/><path d="M375 410 H215 Q180 410 180 465 Q180 520 215 520 H375"/><rect x="435" y="335" width="135" height="255" rx="30"/></g></svg>
<div class="t" style="left:526.40px;top:584px;font-size:10.85px;line-height:10.85px;font-weight:400;color:#3f74c9;-webkit-text-stroke:0.45px #3f74c9;">Android_13_device_of..</div>
<svg style="position:absolute;left:645px;top:586.3px;" width="9" height="8" viewBox="0 0 9 8"><path d="M1 7.2 L7.2 1.1 M1.3 1 H7.6 V7" fill="none" stroke="#3f74c9" stroke-width="1.4"/></svg>
<div class="t" style="left:682.50px;top:585px;font-size:10.2px;line-height:10.2px;font-weight:400;color:#4a525e;">System</div>
<svg style="position:absolute;left:794.3px;top:583.6px;" width="12" height="12" viewBox="0 0 12 12"><circle cx="6" cy="6" r="4.45" fill="none" stroke="#f0b030" stroke-width="1.25"/><path d="M6 3.6 V6.4" stroke="#f0b030" stroke-width="1.3"/><circle cx="6" cy="8.1" r="0.7" fill="#f0b030"/></svg>
<div class="t" style="left:808.90px;top:585px;font-size:10.4px;line-height:10.4px;font-weight:400;color:#5b6370;">Acknowledged</div>
<div class="t" style="left:914.30px;top:577px;font-size:10.0px;line-height:10.0px;font-weight:400;color:#383f4b;">2d ago</div>
<div class="t" style="left:914.30px;top:595px;font-size:9.1px;line-height:9.1px;font-weight:400;color:#3f74c9;">2 occurrences</div>
<div style="position:absolute;left:183px;top:657px;width:829px;height:1px;background:#eceef0"></div>
<div style="position:absolute;left:188.9px;top:629.3px;width:11.5px;height:11.5px;box-sizing:border-box;border:1.5px solid #6c717a;border-radius:2px;background:#fff"></div>
<div style="position:absolute;left:219.4px;top:624.0px;width:42px;height:22px;background:#dae6fc;border-radius:3px"></div>
<div class="t" style="left:219.40px;top:631px;font-size:8.95px;line-height:8.95px;font-weight:400;color:#3b4350;-webkit-text-stroke:0.12px #3b4350;width:42px;text-align:center;letter-spacing:-0.25px;text-indent:-0.25px">LOW</div>
<div class="t" style="left:281.00px;top:621px;font-size:10.95px;line-height:10.95px;font-weight:400;color:#3f74c9;-webkit-text-stroke:0.45px #3f74c9;">Poor Battery Health</div>
<div class="t" style="left:281.00px;top:638px;font-size:9.05px;line-height:9.05px;font-weight:400;color:#737a84;">Battery health of the device is less than 75%</div>
<svg style="position:absolute;left:502px;top:621.5px;" width="30" height="26" viewBox="0 0 885 767"><g fill="none" stroke="#3b4c63" stroke-width="38" stroke-linejoin="round" stroke-linecap="round"><path d="M225 410 V255 Q225 235 245 235 H470 Q490 235 490 255"/><path d="M375 410 H215 Q180 410 180 465 Q180 520 215 520 H375"/><rect x="435" y="335" width="135" height="255" rx="30"/></g></svg>
<div class="t" style="left:526.40px;top:630px;font-size:10.8px;line-height:10.8px;font-weight:400;color:#3f74c9;-webkit-text-stroke:0.45px #3f74c9;">Chase_Dell2_WIN-20...</div>
<svg style="position:absolute;left:645px;top:631.8px;" width="9" height="8" viewBox="0 0 9 8"><path d="M1 7.2 L7.2 1.1 M1.3 1 H7.6 V7" fill="none" stroke="#3f74c9" stroke-width="1.4"/></svg>
<div class="t" style="left:682.50px;top:631px;font-size:10.2px;line-height:10.2px;font-weight:400;color:#4a525e;">System</div>
<svg style="position:absolute;left:794.3px;top:629.1px;" width="12" height="12" viewBox="0 0 12 12"><circle cx="6" cy="6" r="4.45" fill="none" stroke="#f0b030" stroke-width="1.25"/><path d="M6 3.6 V6.4" stroke="#f0b030" stroke-width="1.3"/><circle cx="6" cy="8.1" r="0.7" fill="#f0b030"/></svg>
<div class="t" style="left:808.90px;top:630px;font-size:10.4px;line-height:10.4px;font-weight:400;color:#5b6370;">Acknowledged</div>
<div class="t" style="left:914.30px;top:630px;font-size:10.0px;line-height:10.0px;font-weight:400;color:#383f4b;">10d ago</div>
<div style="position:absolute;left:183px;top:702px;width:829px;height:1px;background:#eceef0"></div>
<div style="position:absolute;left:187.4px;top:674.3px;width:11.5px;height:11.5px;box-sizing:border-box;border:1.5px solid #6c717a;border-radius:2px;background:#fff"></div>
<div style="position:absolute;left:216.6px;top:669.0px;width:44.5px;height:22px;background:#fde8ea;border-radius:3px"></div>
<div class="t" style="left:216.60px;top:676px;font-size:8.95px;line-height:8.95px;font-weight:400;color:#3b4350;-webkit-text-stroke:0.12px #3b4350;width:44.5px;text-align:center;letter-spacing:-0.25px;text-indent:-0.25px">HIGH</div>
<div class="t" style="left:279.80px;top:667px;font-size:10.6px;line-height:10.6px;font-weight:400;color:#383f4b;-webkit-text-stroke:0.15px #383f4b;">Unauthorized software installed on devi..</div>
<div class="t" style="left:279.80px;top:685px;font-size:9.0px;line-height:9.0px;font-weight:400;color:#737a84;">Unauthorized software is present on devices of..</div>
<svg style="position:absolute;left:500.5px;top:666.5px;" width="30" height="26" viewBox="0 0 885 767"><g fill="none" stroke="#3f74c9" stroke-width="38" stroke-linejoin="round"><circle cx="375" cy="270" r="86"/><path d="M245 520 Q245 420 375 420 Q510 420 510 520 Q510 575 460 578 H290 Q245 575 245 520 Z"/></g></svg>
<div class="t" style="left:524.90px;top:675px;font-size:10.65px;line-height:10.65px;font-weight:400;color:#3f74c9;-webkit-text-stroke:0.45px #3f74c9;">Michael Chase</div>
<svg style="position:absolute;left:600.5px;top:676.8px;" width="9" height="8" viewBox="0 0 9 8"><path d="M1 7.2 L7.2 1.1 M1.3 1 H7.6 V7" fill="none" stroke="#3f74c9" stroke-width="1.4"/></svg>
<div class="t" style="left:681.00px;top:676px;font-size:10.2px;line-height:10.2px;font-weight:400;color:#4a525e;">System</div>
<svg style="position:absolute;left:792.8px;top:674.1px;" width="12" height="12" viewBox="0 0 12 12"><circle cx="6" cy="6" r="4.45" fill="none" stroke="#52c5b9" stroke-width="1.3"/><path d="M4 6.1 L5.4 7.3 L8 4.6" fill="none" stroke="#52c5b9" stroke-width="1.3"/></svg>
<div class="t" style="left:807.40px;top:676px;font-size:10.4px;line-height:10.4px;font-weight:400;color:#7b828c;">Resolved</div>
<div class="t" style="left:912.80px;top:675px;font-size:10.0px;line-height:10.0px;font-weight:400;color:#383f4b;">3 months ago</div>
<svg style="position:absolute;left:956.2px;top:203.9px;" width="12" height="12" viewBox="0 0 12 12"><circle cx="6" cy="6" r="4.3" fill="none" stroke="#383f4b" stroke-width="1.2"/><path d="M6 3.6 V7.6" stroke="#383f4b" stroke-width="1.05"/><path d="M6 6 V7.8" stroke="#383f4b" stroke-width="1.5"/></svg>
<svg style="position:absolute;left:956.2px;top:249.9px;" width="12" height="12" viewBox="0 0 12 12"><circle cx="6" cy="6" r="4.3" fill="none" stroke="#383f4b" stroke-width="1.2"/><path d="M6 3.6 V7.6" stroke="#383f4b" stroke-width="1.05"/><path d="M6 6 V7.8" stroke="#383f4b" stroke-width="1.5"/></svg>
<svg style="position:absolute;left:952.7px;top:343.4px;" width="12" height="12" viewBox="0 0 12 12"><circle cx="6" cy="6" r="4.3" fill="none" stroke="#383f4b" stroke-width="1.2"/><path d="M6 3.6 V7.6" stroke="#383f4b" stroke-width="1.05"/><path d="M6 6 V7.8" stroke="#383f4b" stroke-width="1.5"/></svg>
<svg style="position:absolute;left:952.7px;top:390.9px;" width="12" height="12" viewBox="0 0 12 12"><circle cx="6" cy="6" r="4.3" fill="none" stroke="#383f4b" stroke-width="1.2"/><path d="M6 3.6 V7.6" stroke="#383f4b" stroke-width="1.05"/><path d="M6 6 V7.8" stroke="#383f4b" stroke-width="1.5"/></svg>
<svg style="position:absolute;left:947.5px;top:530.4px;" width="12" height="12" viewBox="0 0 12 12"><circle cx="6" cy="6" r="4.3" fill="none" stroke="#383f4b" stroke-width="1.2"/><path d="M6 3.6 V7.6" stroke="#383f4b" stroke-width="1.05"/><path d="M6 6 V7.8" stroke="#383f4b" stroke-width="1.5"/></svg>
<svg style="position:absolute;left:949.3px;top:575.9px;" width="12" height="12" viewBox="0 0 12 12"><circle cx="6" cy="6" r="4.3" fill="none" stroke="#383f4b" stroke-width="1.2"/><path d="M6 3.6 V7.6" stroke="#383f4b" stroke-width="1.05"/><path d="M6 6 V7.8" stroke="#383f4b" stroke-width="1.5"/></svg>
<svg style="position:absolute;left:859.5px;top:733px;" width="11" height="10" viewBox="0 0 11 10"><path d="M10.2 5 H1 M5 1 L1 5 L5 9" fill="none" stroke="#383f4b" stroke-width="1.4" stroke-linecap="round" stroke-linejoin="round"/></svg>
<div style="position:absolute;left:887.8px;top:726.6px;width:22.4px;height:22.4px;box-sizing:border-box;border:2px solid #40bfb5;border-radius:50%"></div>
<div class="t" style="left:896.30px;top:734px;font-size:10.2px;line-height:10.2px;font-weight:400;color:#383f4b;-webkit-text-stroke:0.3px #383f4b;">1</div>
<div class="t" style="left:930.20px;top:734px;font-size:10.2px;line-height:10.2px;font-weight:400;color:#383f4b;-webkit-text-stroke:0.3px #383f4b;">2</div>
<div class="t" style="left:964.30px;top:734px;font-size:10.2px;line-height:10.2px;font-weight:400;color:#383f4b;-webkit-text-stroke:0.3px #383f4b;">3</div>
<svg style="position:absolute;left:995.5px;top:733px;" width="11" height="10" viewBox="0 0 11 10"><path d="M0.8 5 H10 M6 1 L10 5 L6 9" fill="none" stroke="#383f4b" stroke-width="1.4" stroke-linecap="round" stroke-linejoin="round"/></svg>
</body></html>
